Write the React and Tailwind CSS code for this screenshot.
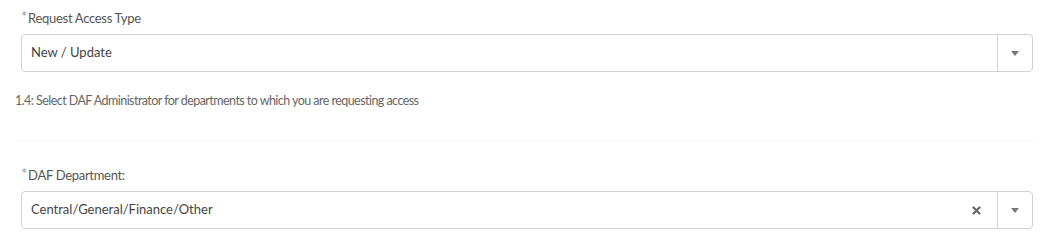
import { useState } from 'react'

function Caret() {
  return (
    <svg width="8" height="5" viewBox="0 0 8 5" className="text-[#777]">
      <path d="M0 0 L8 0 L4 5 Z" fill="currentColor" />
    </svg>
  )
}

function Clear() {
  return (
    <svg width="9" height="9" viewBox="0 0 9 9" className="text-[#666]">
      <path d="M1.5 1.5 L7.5 7.5 M7.5 1.5 L1.5 7.5" stroke="currentColor" strokeWidth="2.2" strokeLinecap="round" />
    </svg>
  )
}

function Field({ label, value, clearable }) {
  return (
    <div className="px-[21px]">
      <div className="flex items-start h-[20px] text-[13px] tracking-[-0.3px] text-[#555]">
        <span className="text-[#999] text-[15px] leading-none mr-[1px] mt-[1px]">*</span>
        <span className="leading-[20px]">{label}</span>
      </div>
      <div className="mt-[6px] flex h-[38px] w-[1012px] border border-[#d2d2d2] rounded-[4px] bg-white">
        <div className="flex-1 flex items-center pl-[9px] text-[13px] text-[#444]">{value}</div>
        {clearable && (
          <div className="flex items-center justify-center w-[30px] mr-[6px]">
            <Clear />
          </div>
        )}
        <div className="flex items-center justify-center w-[35px] border-l border-[#d2d2d2]">
          <Caret />
        </div>
      </div>
    </div>
  )
}

export default function App() {
  const [type] = useState('New / Update')
  return (
    <div className="w-[1049px] h-[250px] bg-white pt-[8px] font-['Lato','Open_Sans',sans-serif]">
      <Field label="Request Access Type" value={type} />
      <div className="px-[15px] mt-[19px] text-[12.5px] tracking-[-0.55px] text-[#666] leading-[20px]">
        1.4: Select DAF Administrator for departments to which you are requesting access
      </div>
      <div className="mx-[15px] mt-[29px] h-px bg-[#f3f3f3]" />
      <div className="mt-[24px]">
        <Field label="DAF Department:" value="Central/General/Finance/Other" clearable />
      </div>
    </div>
  )
}
